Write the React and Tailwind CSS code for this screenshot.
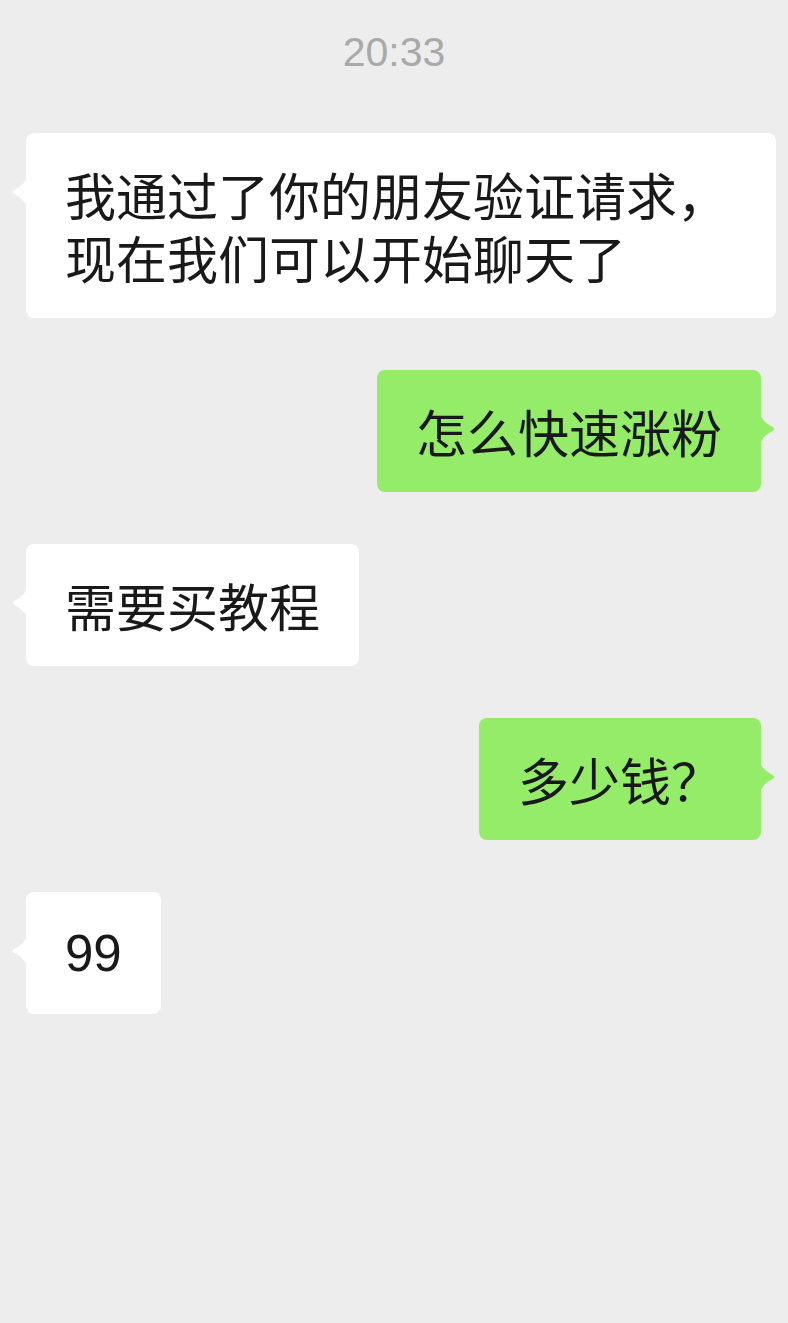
import React from "react";

const messages = [
  { side: "left", text: "我通过了你的朋友验证请求，现在我们可以开始聊天了" },
  { side: "right", text: "怎么快速涨粉" },
  { side: "left", text: "需要买教程" },
  { side: "right", text: "多少钱？" },
  { side: "left", text: "99", latin: true },
];

// little curved pointer on the bubble side
function Tail({ side, color }) {
  if (side === "left") {
    return (
      <svg width="16" height="32" viewBox="0 0 16 32" className="absolute left-[-15px] top-[43px]">
        <path d="M16 0 Q15 8 3 14.2 Q0.5 16 3 17.8 Q15 24 16 32 Z" fill={color} />
      </svg>
    );
  }
  return (
    <svg width="16" height="32" viewBox="0 0 16 32" className="absolute right-[-15px] top-[43px]">
      <path d="M0 0 Q1 8 13 14.2 Q15.5 16 13 17.8 Q1 24 0 32 Z" fill={color} />
    </svg>
  );
}

function Bubble({ m }) {
  const left = m.side === "left";
  const color = left ? "#ffffff" : "#95ec69";
  return (
    <div className={left ? "self-start" : "self-end mr-[15px]"}>
      <div
        className={
          "relative max-w-[750px] rounded-lg px-[39px] py-[29.5px] text-[51px] leading-[63px] text-[#191919] " +
          (left ? "bg-white" : "bg-[#95ec69]")
        }
        style={{ fontFamily: m.latin ? "'Liberation Sans', 'Noto Sans CJK SC', sans-serif" : "'Noto Sans CJK SC', sans-serif" }}
      >
        <Tail side={m.side} color={color} />
        {m.text}
      </div>
    </div>
  );
}

export default function App() {
  return (
    <div className="min-h-[1323px] w-[788px] bg-[#ededed] pt-[30px]">
      <div
        className="text-center text-[41px] leading-[44px] text-[#a9a9a9]"
        style={{ fontFamily: "'Liberation Sans', 'Noto Sans CJK SC', sans-serif" }}
      >
        20:33
      </div>
      <div className="mt-[59px] flex flex-col gap-[52px] pl-[26px] pr-[12px]">
        {messages.map((m, i) => (
          <Bubble key={i} m={m} />
        ))}
      </div>
    </div>
  );
}
